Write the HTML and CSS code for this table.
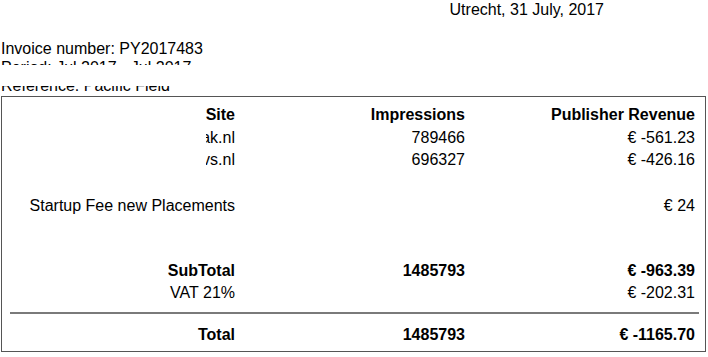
FILE: index.html
```html
<!DOCTYPE html>
<html lang="en">
<head>
<meta charset="utf-8">
<title>Invoice</title>
<link rel="stylesheet" href="styles.css">
</head>
<body>
<div class="page">
  <div class="date">Utrecht, 31 July, 2017</div>
  <div class="meta">
    <div class="meta-line">Invoice number: PY2017483</div>
    <div class="meta-line">Period: Jul 2017 - Jul 2017</div>
    <div class="meta-line">Reference: Pacific Field</div>
    <div class="mask"></div>
  </div>
  <div class="box">
    <div class="row head bold">
      <div>Site</div>
      <div>Impressions</div>
      <div>Publisher Revenue</div>
    </div>
    <div class="row">
      <div class="site-cut"><span class="clip">ak.nl</span></div>
      <div>789466</div>
      <div>€ -561.23</div>
    </div>
    <div class="row">
      <div class="site-cut"><span class="clip">vs.nl</span></div>
      <div>696327</div>
      <div>€ -426.16</div>
    </div>
    <div class="row blank first-gap"></div>
    <div class="row">
      <div>Startup Fee new Placements</div>
      <div></div>
      <div>€ 24</div>
    </div>
    <div class="row blank"></div>
    <div class="row blank"></div>
    <div class="row bold">
      <div>SubTotal</div>
      <div>1485793</div>
      <div>€ -963.39</div>
    </div>
    <div class="row">
      <div>VAT 21%</div>
      <div></div>
      <div>€ -202.31</div>
    </div>
    <div class="separator"></div>
    <div class="row bold">
      <div>Total</div>
      <div>1485793</div>
      <div>€ -1165.70</div>
    </div>
  </div>
</div>
</body>
</html>
```
FILE: styles.css
```css
html, body {
  margin: 0;
  padding: 0;
  background: #fff;
}

body {
  font-family: "Liberation Sans", Arial, sans-serif;
  font-size: 16px;
  color: #000;
}

.page {
  padding: 1px 0 0 1px;
  width: 707px;
}

.date {
  text-align: right;
  padding-right: 104px;
  line-height: 18.4px;
}

.meta {
  position: relative;
  margin-top: 21px;
  line-height: 18.4px;
}

.meta-line {
  white-space: nowrap;
}

.mask {
  position: absolute;
  left: 0;
  right: 0;
  top: 24.8px;
  height: 20.8px;
  background: #fff;
}

.box {
  width: 692px;
  border: 1px solid #555;
  padding: 7.5px 8px 4.5px 3px;
}

.row {
  display: grid;
  grid-template-columns: 230px 230px 230px;
  height: 22px;
  line-height: 22px;
  text-align: right;
  white-space: nowrap;
}

.row.head {
  height: 23px;
}

.row.blank {
  height: 21.75px;
}

.row.first-gap {
  height: 23.5px;
}

.bold {
  font-weight: bold;
}

.site-cut {
  display: flex;
  justify-content: flex-end;
}

.clip {
  display: flex;
  justify-content: flex-end;
  width: 29px;
  overflow: hidden;
  white-space: nowrap;
}

.separator {
  height: 2px;
  background: #7a7a7a;
  margin: 7.5px -2px 10.5px 5px;
}
```
